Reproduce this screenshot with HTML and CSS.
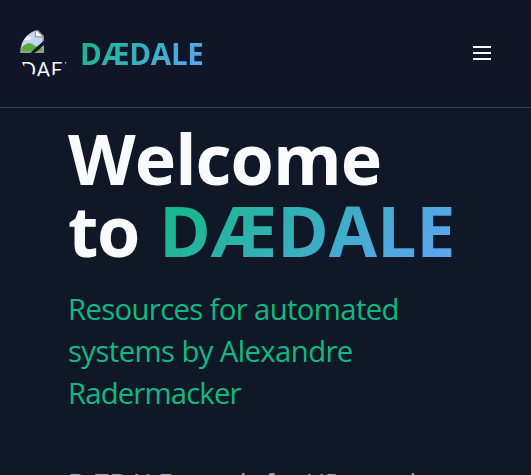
FILE: index.html
```html
<!DOCTYPE html>
<html lang="en">
<head>
<meta charset="utf-8">
<meta name="viewport" content="width=device-width, initial-scale=1">
<title>DÆDALE</title>
<link rel="stylesheet" href="styles.css">
</head>
<body>
<header class="header">
  <a class="brand">
    <span class="logo">
      <svg class="logo-icon" width="24" height="24" viewBox="0 0 24 24" aria-hidden="true">
        <path fill="#979797" d="M0 0h17l7 7v17H0z"/>
        <path fill="#c3d7f5" d="M1.500 1.500h14v6.500h7v14.500h-21z"/>
        <path fill="#eef3fc" d="M4 9c0-4 4-4 5-1 3 0 3 3 1 3H4z"/>
        <path fill="#58ad32" d="M1.500 22.500v-3.500C5 14 11 12.500 15 17l7.500 2v3.500z"/>
        <path fill="#f7f7f7" d="M16 1.500 22.500 7.500H16z"/>
        <path fill="none" stroke="#979797" d="M15.500 1v7H23"/>
        <path fill="#111829" d="M24 11.500V16l-9 8h-4.500l4-4z"/>
        <path fill="#979797" d="M16 22.700h8V24h-9.500z"/>
      </svg>
      <span class="logo-alt">DAEDALE</span>
    </span>
    <span class="brand-name gradient">DÆDALE</span>
  </a>
  <button class="menu" aria-label="Menu"><span></span><span></span><span></span></button>
</header>
<main class="hero">
  <h1 class="title"><span class="line welcome">Welcome</span><span class="line"><span class="to">to</span> <span class="name gradient">DÆDALE</span></span></h1>
  <p class="subtitle">Resources for automated<br><span class="second">systems by Alexandre</span><br><span class="third">Radermacker</span></p>
  <p class="description">DÆDALE stands for UR <span class="last">need</span></p>
</main>
</body>
</html>
```

FILE: styles.css
```css
* { box-sizing: border-box; }
body {
  margin: 0;
  height: 475px;
  overflow: hidden;
  background: #101828;
  color: #f9fafc;
  font-family: "Open Sans", "Noto Sans", sans-serif;
}
.header {
  display: flex;
  align-items: center;
  justify-content: space-between;
  height: 108px;
  padding: 0 40px 2px 20px;
  border-bottom: 1px solid #334052;
  background: #101627;
}
.brand { display: flex; align-items: center; gap: 12px; }
.logo {
  width: 48px;
  height: 48px;
  overflow: hidden;
  border-radius: 24px;
}
.logo-icon { display: block; }
.logo-alt { display: block; margin-top: 4px; font-size: 22.500px; font-weight: 500; line-height: 26px; }
.gradient {
  background: linear-gradient(135deg, #10b981, #60a5fa);
  -webkit-background-clip: text;
  background-clip: text;
  color: transparent;
}
.brand-name { padding-top: 2px; font-size: 29.500px; font-weight: 700; line-height: 40px; letter-spacing: -0.3px; }
.menu {
  display: flex;
  flex-direction: column;
  gap: 4px;
  padding: 0;
  border: 0;
  background: none;
}
.menu span { width: 18px; height: 2px; background: #f9fafc; }
.hero { height: 367px; padding: 14px 68px 0; overflow: hidden; white-space: nowrap; }
.title { margin: 0; font-size: 70px; font-weight: 700; line-height: 72px; }
.line { display: block; }
.welcome { letter-spacing: -0.95px; }
.to { display: inline-block; margin-right: 2px; letter-spacing: -1.5px; }
.name { display: inline-block; letter-spacing: -0.15px; }
.subtitle { margin: 22px 0 0; color: #10b981; font-size: 29.300px; line-height: 42px; letter-spacing: -0.65px; }
.second { letter-spacing: -0.6px; }
.third { letter-spacing: -0.85px; }
.description { margin: 49px 0 0; color: #94a3b8; font-size: 26.500px; line-height: 42px; letter-spacing: -0.4px; }
.last { margin-left: 8px; }
```
